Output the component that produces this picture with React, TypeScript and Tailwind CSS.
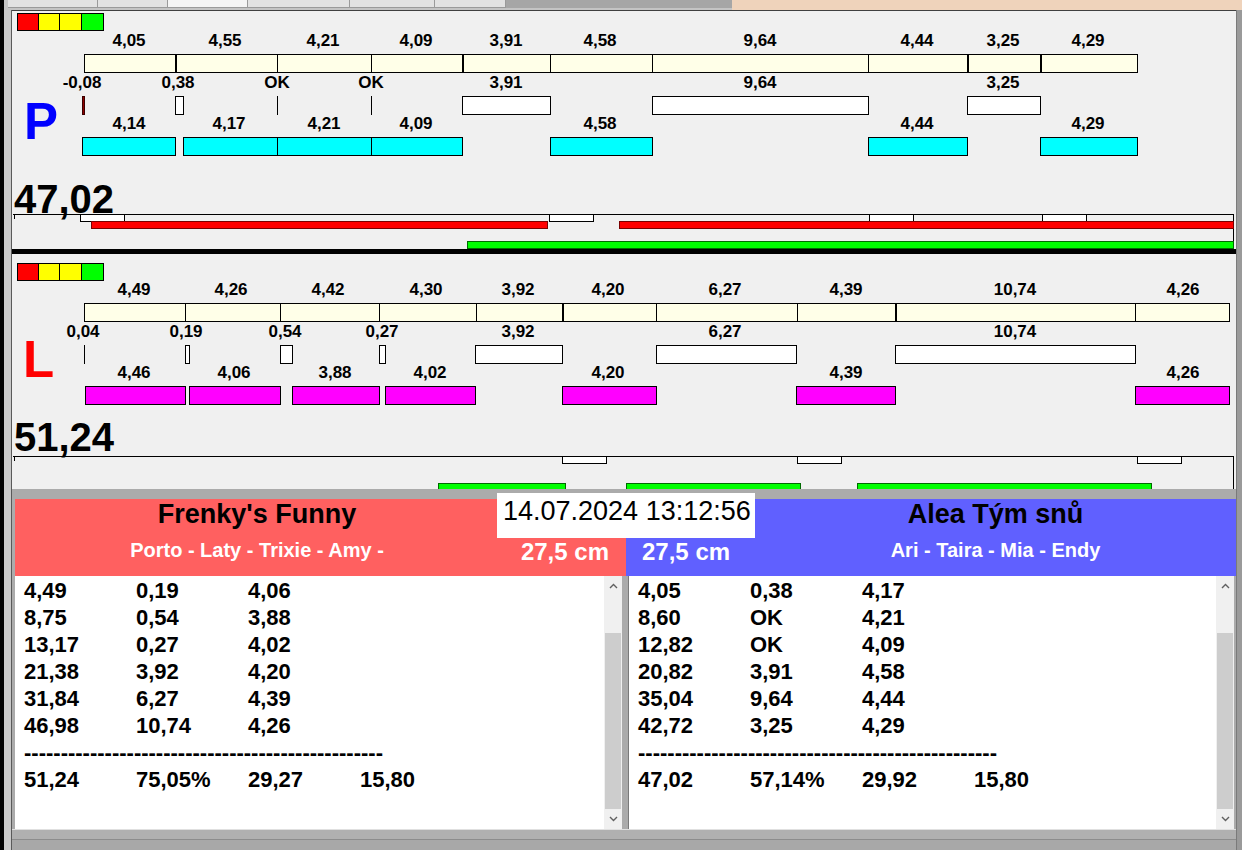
import React from "react";

type Span = [number, number];
type Label = [number, string];
type Mark = { kind: "line" | "box" | "red"; x1: number; x2: number };

type ChartData = {
  height: number;
  legendTop: number;
  letter: string;
  letterColor: string;
  letterTop: number;
  letterLeft: number;
  total: string;
  totalTop: number;
  rows: [number, number, number, number, number, number];
  labels1: Label[];
  dividers: number[];
  thick: number[];
  labels2: Label[];
  marks: Mark[];
  labels3: Label[];
  bars3: Span[];
  bars3Color: string;
  lineTop: number;
  whites: Span[];
  redTop: number;
  reds: Span[];
  greenTop: number;
  greens: Span[];
};

// page x -> panel x (panel starts at x=12)
const px = (x: number) => x - 12;

const topChart: ChartData = {
  height: 238,
  legendTop: 2,
  letter: "P",
  letterColor: "text-[#0000ff]",
  letterTop: 86,
  letterLeft: 12,
  total: "47,02",
  totalTop: 168,
  rows: [20, 43, 62, 85, 103, 126],
  labels1: [
    [129, "4,05"], [225, "4,55"], [323, "4,21"], [416, "4,09"], [506, "3,91"],
    [600, "4,58"], [760, "9,64"], [917, "4,44"], [1003, "3,25"], [1088, "4,29"],
  ],
  dividers: [84, 175, 277, 371, 462, 550, 652, 868, 967, 1040, 1137],
  thick: [175, 462, 967, 1040],
  labels2: [
    [82, "-0,08"], [178, "0,38"], [277, "OK"], [371, "OK"], [506, "3,91"], [760, "9,64"], [1003, "3,25"],
  ],
  marks: [
    { kind: "red", x1: 82, x2: 85 },
    { kind: "box", x1: 175, x2: 184 },
    { kind: "line", x1: 277, x2: 278 },
    { kind: "line", x1: 371, x2: 372 },
    { kind: "box", x1: 462, x2: 551 },
    { kind: "box", x1: 652, x2: 869 },
    { kind: "box", x1: 967, x2: 1041 },
  ],
  labels3: [
    [129, "4,14"], [229, "4,17"], [324, "4,21"], [416, "4,09"], [600, "4,58"], [917, "4,44"], [1088, "4,29"],
  ],
  bars3: [[82, 176], [183, 278], [277, 372], [371, 463], [550, 653], [868, 968], [1040, 1138]],
  bars3Color: "bg-[#00ffff]",
  lineTop: 203,
  whites: [[80, 125], [549, 594], [869, 914], [1042, 1087]],
  redTop: 210,
  reds: [[91, 548], [619, 1234]],
  greenTop: 230,
  greens: [[467, 1234]],
};

const bottomChart: ChartData = {
  height: 235,
  legendTop: 9,
  letter: "L",
  letterColor: "text-[#ff0000]",
  letterTop: 81,
  letterLeft: 11,
  total: "51,24",
  totalTop: 163,
  rows: [26, 49, 68, 91, 109, 132],
  labels1: [
    [134, "4,49"], [231, "4,26"], [328, "4,42"], [426, "4,30"], [518, "3,92"],
    [608, "4,20"], [725, "6,27"], [846, "4,39"], [1015, "10,74"], [1183, "4,26"],
  ],
  dividers: [84, 185, 280, 379, 476, 562, 656, 797, 895, 1135, 1229],
  thick: [562, 895],
  labels2: [
    [83, "0,04"], [186, "0,19"], [285, "0,54"], [382, "0,27"], [518, "3,92"], [725, "6,27"], [1015, "10,74"],
  ],
  marks: [
    { kind: "line", x1: 84, x2: 85 },
    { kind: "box", x1: 185, x2: 190 },
    { kind: "box", x1: 280, x2: 293 },
    { kind: "box", x1: 379, x2: 386 },
    { kind: "box", x1: 475, x2: 563 },
    { kind: "box", x1: 656, x2: 797 },
    { kind: "box", x1: 895, x2: 1136 },
  ],
  labels3: [
    [134, "4,46"], [234, "4,06"], [335, "3,88"], [430, "4,02"], [608, "4,20"], [846, "4,39"], [1183, "4,26"],
  ],
  bars3: [[85, 186], [189, 281], [292, 380], [385, 476], [562, 657], [796, 896], [1135, 1230]],
  bars3Color: "bg-[#ff00ff]",
  lineTop: 202,
  whites: [[562, 607], [797, 842], [1137, 1182]],
  redTop: 0,
  reds: [],
  greenTop: 229,
  greens: [[438, 566], [626, 801], [857, 1152]],
};

function Labels({ items, top }: { items: Label[]; top: number }) {
  return (
    <>
      {items.map(([cx, t], i) => (
        <div
          key={i}
          className="absolute w-20 text-center text-[17px] font-bold leading-5 text-black"
          style={{ left: px(cx) - 40, top }}
        >
          {t}
        </div>
      ))}
    </>
  );
}

function Chart({ d }: { d: ChartData }) {
  const [l1, b1, l2, m2, l3, b3] = d.rows;
  const first = d.dividers[0];
  const last = d.dividers[d.dividers.length - 1];
  return (
    <div className="relative w-full overflow-hidden bg-[#f0f0f0]" style={{ height: d.height }}>
      <div className="absolute left-[5px] flex border border-black" style={{ top: d.legendTop }}>
        <div className="h-4 w-[21px] border-r border-black bg-[#ff0000]" />
        <div className="h-4 w-[21px] border-r border-black bg-[#ffff00]" />
        <div className="h-4 w-[22px] border-r border-black bg-[#ffff00]" />
        <div className="h-4 w-[21px] bg-[#00ff00]" />
      </div>

      <div
        className={`absolute text-[51px] font-bold leading-[50px] ${d.letterColor}`}
        style={{ left: d.letterLeft, top: d.letterTop }}
      >
        {d.letter}
      </div>

      <div className="absolute left-[2px] text-[40px] font-bold leading-[40px] text-black" style={{ top: d.totalTop }}>
        {d.total}
      </div>

      <Labels items={d.labels1} top={l1} />
      <div
        className="absolute h-[19px] border border-black bg-[#ffffe8]"
        style={{ left: px(first), top: b1, width: last - first + 1 }}
      />
      {d.dividers.slice(1, -1).map((x) => (
        <div
          key={x}
          className={`absolute h-[19px] bg-black ${d.thick.includes(x) ? "w-[2px]" : "w-px"}`}
          style={{ left: px(x), top: b1 }}
        />
      ))}

      <Labels items={d.labels2} top={l2} />
      {d.marks.map((m, i) => (
        <div
          key={i}
          className={`absolute h-[19px] ${
            m.kind === "line"
              ? "bg-black"
              : m.kind === "red"
              ? "border border-[#3a0000] bg-[#900000]"
              : "border border-black bg-white"
          }`}
          style={{ left: px(m.x1), top: m2, width: m.x2 - m.x1 }}
        />
      ))}

      <Labels items={d.labels3} top={l3} />
      {d.bars3.map(([a, b], i) => (
        <div
          key={i}
          className={`absolute h-[19px] border border-black ${d.bars3Color}`}
          style={{ left: px(a), top: b3, width: b - a }}
        />
      ))}

      <div className="absolute left-px h-px w-[1221px] bg-black" style={{ top: d.lineTop }} />
      <div className="absolute left-[2px] h-[5px] w-px bg-black" style={{ top: d.lineTop }} />
      <div className="absolute bottom-0 left-[1221px] w-px bg-black" style={{ top: d.lineTop }} />
      {d.whites.map(([a, b], i) => (
        <div
          key={i}
          className="absolute h-2 border border-black bg-white"
          style={{ left: px(a), top: d.lineTop, width: b - a }}
        />
      ))}
      {d.reds.map(([a, b], i) => (
        <div
          key={i}
          className="absolute h-2 border border-[#7a0000] bg-[#ff0000]"
          style={{ left: px(a), top: d.redTop, width: b - a }}
        />
      ))}
      {d.greens.map(([a, b], i) => (
        <div
          key={i}
          className="absolute h-2 border border-[#006a00] bg-[#00ff00]"
          style={{ left: px(a), top: d.greenTop, width: b - a }}
        />
      ))}
    </div>
  );
}

function Chevron({ up }: { up?: boolean }) {
  return (
    <svg width="9" height="6" viewBox="0 0 9 6">
      <polyline
        points={up ? "1,5 4.5,1.5 8,5" : "1,1 4.5,4.5 8,1"}
        fill="none"
        stroke="#606060"
        strokeWidth="1.4"
      />
    </svg>
  );
}

function ScrollBar() {
  return (
    <div className="flex w-[18px] flex-col bg-[#f0f0f0]">
      <div className="flex h-5 items-center justify-center">
        <Chevron up />
      </div>
      <div className="h-[37px]" />
      <div className="mx-px h-[176px] bg-[#cdcdcd]" />
      <div className="flex-1" />
      <div className="flex h-5 items-center justify-center">
        <Chevron />
      </div>
    </div>
  );
}

const DASHES = "-".repeat(49);

function ResultList({ rows, total }: { rows: string[][]; total: string[] }) {
  return (
    <div className="flex-1 bg-white pt-px text-[22px] font-bold leading-[27px] text-black">
      {rows.map((r, i) => (
        <div key={i} className="flex">
          {r.map((c, j) => (
            <div key={j} className="w-28">
              {c}
            </div>
          ))}
        </div>
      ))}
      <div>{DASHES}</div>
      <div className="flex">
        {total.map((c, j) => (
          <div key={j} className="w-28">
            {c}
          </div>
        ))}
      </div>
    </div>
  );
}

const leftRows = [
  ["4,49", "0,19", "4,06"],
  ["8,75", "0,54", "3,88"],
  ["13,17", "0,27", "4,02"],
  ["21,38", "3,92", "4,20"],
  ["31,84", "6,27", "4,39"],
  ["46,98", "10,74", "4,26"],
];
const rightRows = [
  ["4,05", "0,38", "4,17"],
  ["8,60", "OK", "4,21"],
  ["12,82", "OK", "4,09"],
  ["20,82", "3,91", "4,58"],
  ["35,04", "9,64", "4,44"],
  ["42,72", "3,25", "4,29"],
];

export default function App() {
  return (
    <div className="relative flex h-[850px] w-[1242px] flex-col overflow-hidden bg-[#ababab] font-['Liberation_Sans',Arial,sans-serif]">
      {/* tab strip */}
      <div className="flex h-[10px] shrink-0 bg-[#c4c4c4]">
        <div className="w-1 bg-black" />
        <div className="w-1" />
        {[90, 70, 80, 102, 85, 71].map((w, i) => (
          <div
            key={i}
            className={`h-2 border-b border-r border-[#9a9a9a] ${i === 2 ? "bg-[#f4f4f4]" : "bg-[#e2e2e2]"}`}
            style={{ width: w }}
          />
        ))}
        <div className="h-2 w-[226px] bg-[#a6a6a6]" />
        <div className="flex-1 bg-[#efd3bb]" />
      </div>

      <div className="flex flex-1">
        <div className="w-1 bg-black" />
        <div className="w-[7px] bg-[#c8c8c8]" />
        <div className="flex w-[1225px] flex-col border-l border-[#5a5a5a]">
          <div className="border-t border-[#404040]">
            <Chart d={topChart} />
          </div>
          <div className="h-[5px] bg-black" />
          <Chart d={bottomChart} />
          <div className="h-[10px] bg-[#ababab]" />

          {/* team panels */}
          <div className="relative flex flex-col">
            <div className="flex pl-[3px]">
              <div className="grid h-[77px] w-[611px] grid-cols-[484px_1fr] grid-rows-[31px_40px] bg-[#ff6060]">
                <div className="flex items-center justify-center text-[27px] font-bold text-black">
                  Frenky's Funny
                </div>
                <div />
                <div className="flex items-center justify-center text-[20px] font-bold text-white">
                  Porto - Laty - Trixie - Amy -
                </div>
                <div className="flex items-center justify-end pr-[17px] pt-1 text-[24px] font-bold text-white">
                  27,5 cm
                </div>
              </div>
              <div className="grid h-[77px] w-[610px] grid-cols-[129px_1fr] grid-rows-[31px_40px] bg-[#6060ff]">
                <div />
                <div className="flex items-center justify-center text-[27px] font-bold text-black">
                  Alea Tým snů
                </div>
                <div className="flex items-center pl-4 pt-1 text-[24px] font-bold text-white">27,5 cm</div>
                <div className="flex items-center justify-center text-[20px] font-bold text-white">
                  Ari - Taira - Mia - Endy
                </div>
              </div>
            </div>

            <div className="flex h-[253px] pl-[3px]">
              <div className="flex w-[607px] bg-white pl-[9px]">
                <ResultList rows={leftRows} total={["51,24", "75,05%", "29,27", "15,80"]} />
                <ScrollBar />
              </div>
              <div className="w-[6px] bg-[#ababab]" />
              <div className="flex w-[606px] border-l border-[#7a7a7a] bg-white pl-[9px]">
                <ResultList rows={rightRows} total={["47,02", "57,14%", "29,92", "15,80"]} />
                <ScrollBar />
              </div>
            </div>

            <div className="absolute left-[485px] top-[-6px] h-[45px] w-[258px] bg-white pl-[6px] pt-[3px] text-[27px] leading-[30px] text-black">
              14.07.2024 13:12:56
            </div>
          </div>

          <div className="flex flex-1 flex-col border-t border-[#e0e0e0] bg-[#b0b0b0]">
            <div className="h-[9px]" />
            <div className="flex-1 border-t border-[#8c8c8c] bg-[#a8a8a8]" />
          </div>
        </div>
        <div className="w-[6px] border-l border-[#7a7a7a] bg-[#9a9a9a]" />
      </div>
    </div>
  );
}
